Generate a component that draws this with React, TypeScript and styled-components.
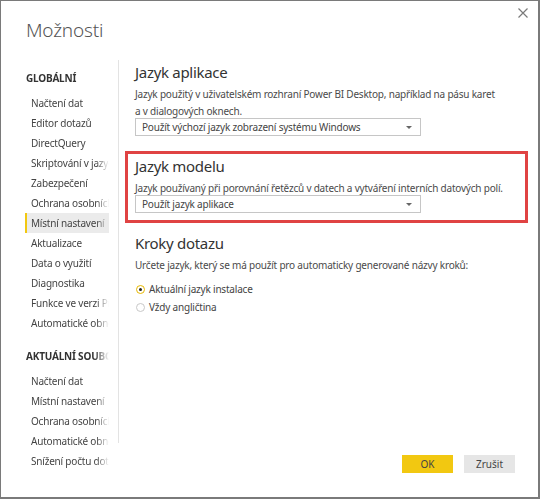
import styled, { createGlobalStyle } from 'styled-components';

const GlobalStyle = createGlobalStyle`
  html, body {
    margin: 0;
    padding: 0;
    background: #ffffff;
  }
  * {
    box-sizing: border-box;
  }
`;

const Dialog = styled.div`
  width: 540px;
  height: 499px;
  border: 1px solid #7a7a7a;
  border-right-width: 2px;
  border-bottom-width: 2px;
  background: #ffffff;
  display: flex;
  flex-direction: column;
  font-family: "Noto Sans", "Open Sans", sans-serif;
  font-size: 10px;
  letter-spacing: -0.2px;
  color: #444444;
`;

const Header = styled.div`
  height: 56px;
  display: flex;
  justify-content: space-between;
  align-items: flex-start;
  padding: 13px 8px 0 25px;
`;

const Title = styled.h1`
  margin: 0;
  font-size: 19px;
  font-weight: 300;
  line-height: 32px;
  letter-spacing: -0.2px;
  color: #555555;
`;

const CloseButton = styled.button`
  width: 14px;
  height: 14px;
  margin-top: -8px;
  padding: 0;
  border: none;
  background: none;
  display: flex;
  align-items: center;
  justify-content: center;
  cursor: pointer;
`;

const Body = styled.div`
  height: 386px;
  display: flex;
`;

const Sidebar = styled.nav`
  width: 118px;
  padding: 8px 9px 0 24px;
  border-right: 1px solid #e3e3e3;
  margin-top: 3px;
`;

const GroupTitle = styled.div<{ $spaced?: boolean }>`
  font-weight: 700;
  line-height: 20px;
  color: #333333;
  padding-left: 1px;
  margin-top: ${(p) => (p.$spaced ? '13px' : '0')};
  margin-bottom: 5px;
  white-space: nowrap;
  overflow: hidden;
  mask-image: linear-gradient(to right, #000 82%, transparent 100%);
`;

const NavItem = styled.div<{ $active?: boolean }>`
  height: 20px;
  line-height: 20px;
  padding-left: 6px;
  color: #444444;
  background: ${(p) => (p.$active ? '#ebebeb' : 'transparent')};
  border-left: 2px solid ${(p) => (p.$active ? '#f2c811' : 'transparent')};
`;

const NavLabel = styled.span`
  display: block;
  white-space: nowrap;
  overflow: hidden;
  margin-left: -2px;
  mask-image: linear-gradient(to right, #000 84%, transparent 100%);
`;

const Content = styled.main`
  flex: 1;
  padding: 0 10px 0 6px;
  display: flex;
  flex-direction: column;
  gap: 5px;
`;

const Section = styled.section<{ $highlight?: boolean }>`
  border: 3px solid ${(p) => (p.$highlight ? '#e04343' : 'transparent')};
  padding: 1px 7px 7px 7px;
`;

const SectionTitle = styled.h2`
  margin: 0;
  font-size: 15px;
  font-weight: 400;
  line-height: 22px;
  letter-spacing: -0.3px;
  color: #333333;
`;

const Description = styled.p<{ $gap?: number }>`
  margin: ${(p) => p.$gap ?? 3}px 0 0 0;
  line-height: 17px;
  color: #4a4a4a;
`;

const Select = styled.div`
  width: 286px;
  height: 18px;
  margin-top: -2px;
  border: 1px solid #c6c6c6;
  padding: 0 8px 0 6px;
  display: flex;
  align-items: center;
  justify-content: space-between;
  color: #444444;
`;

const Caret = styled.span`
  width: 0;
  height: 0;
  border-left: 3px solid transparent;
  border-right: 3px solid transparent;
  border-top: 3px solid #666666;
`;

const RadioList = styled.div`
  margin-top: 6px;
  display: flex;
  flex-direction: column;
`;

const RadioRow = styled.label`
  height: 18px;
  display: flex;
  align-items: center;
  gap: 4px;
  color: #444444;
`;

const RadioDot = styled.span<{ $checked?: boolean }>`
  width: 9px;
  height: 9px;
  border-radius: 50%;
  border: 1px solid ${(p) => (p.$checked ? '#e8b800' : '#c8c8c8')};
  display: flex;
  align-items: center;
  justify-content: center;
  margin-left: 1px;

  &::after {
    content: '';
    width: 3px;
    height: 3px;
    border-radius: 50%;
    background: ${(p) => (p.$checked ? '#222222' : 'transparent')};
  }
`;

const Footer = styled.div`
  flex: 1;
  display: flex;
  justify-content: flex-end;
  align-items: flex-start;
  gap: 11px;
  padding: 12px 23px 0 0;
`;

const Button = styled.button<{ $primary?: boolean }>`
  width: 51px;
  height: 18px;
  border: none;
  padding: 0;
  font-family: inherit;
  font-size: 10px;
  color: #444444;
  background: ${(p) => (p.$primary ? '#f2c811' : '#e6e6e6')};
`;

const globalItems = [
  'Načtení dat',
  'Editor dotazů',
  'DirectQuery',
  'Skriptování v jazyce R',
  'Zabezpečení',
  'Ochrana osobních údajů',
  'Místní nastavení',
  'Aktualizace',
  'Data o využití',
  'Diagnostika',
  'Funkce ve verzi Preview',
  'Automatické obnovení',
];

const fileItems = [
  'Načtení dat',
  'Místní nastavení',
  'Ochrana osobních údajů',
  'Automatické obnovení',
  'Snížení počtu dotazů',
];

export default function App() {
  return (
    <>
      <GlobalStyle />
      <Dialog>
        <Header>
          <Title>Možnosti</Title>
          <CloseButton aria-label="Zavřít">
            <svg width="10" height="10" viewBox="0 0 10 10">
              <path d="M0.5 0.5 L9.5 9.5 M9.5 0.5 L0.5 9.5" stroke="#7a7a7a" strokeWidth="1.2" />
            </svg>
          </CloseButton>
        </Header>
        <Body>
          <Sidebar>
            <GroupTitle>GLOBÁLNÍ</GroupTitle>
            {globalItems.map((item) => (
              <NavItem key={item} $active={item === 'Místní nastavení'}>
                <NavLabel>{item}</NavLabel>
              </NavItem>
            ))}
            <GroupTitle $spaced>AKTUÁLNÍ SOUBOR</GroupTitle>
            {fileItems.map((item) => (
              <NavItem key={item}>
                <NavLabel>{item}</NavLabel>
              </NavItem>
            ))}
          </Sidebar>
          <Content>
            <Section>
              <SectionTitle>Jazyk aplikace</SectionTitle>
              <Description>
                Jazyk použitý v uživatelském rozhraní Power BI Desktop, například na pásu karet
                <br />a v dialogových oknech.
              </Description>
              <Select>
                Použít výchozí jazyk zobrazení systému Windows
                <Caret />
              </Select>
            </Section>
            <Section $highlight>
              <SectionTitle>Jazyk modelu</SectionTitle>
              <Description>
                Jazyk používaný při porovnání řetězců v datech a vytváření interních datových polí.
              </Description>
              <Select>
                Použít jazyk aplikace
                <Caret />
              </Select>
            </Section>
            <Section>
              <SectionTitle>Kroky dotazu</SectionTitle>
              <Description>
                Určete jazyk, který se má použít pro automaticky generované názvy kroků:
              </Description>
              <RadioList>
                <RadioRow>
                  <RadioDot $checked />
                  Aktuální jazyk instalace
                </RadioRow>
                <RadioRow>
                  <RadioDot />
                  Vždy angličtina
                </RadioRow>
              </RadioList>
            </Section>
          </Content>
        </Body>
        <Footer>
          <Button $primary>OK</Button>
          <Button>Zrušit</Button>
        </Footer>
      </Dialog>
    </>
  );
}
